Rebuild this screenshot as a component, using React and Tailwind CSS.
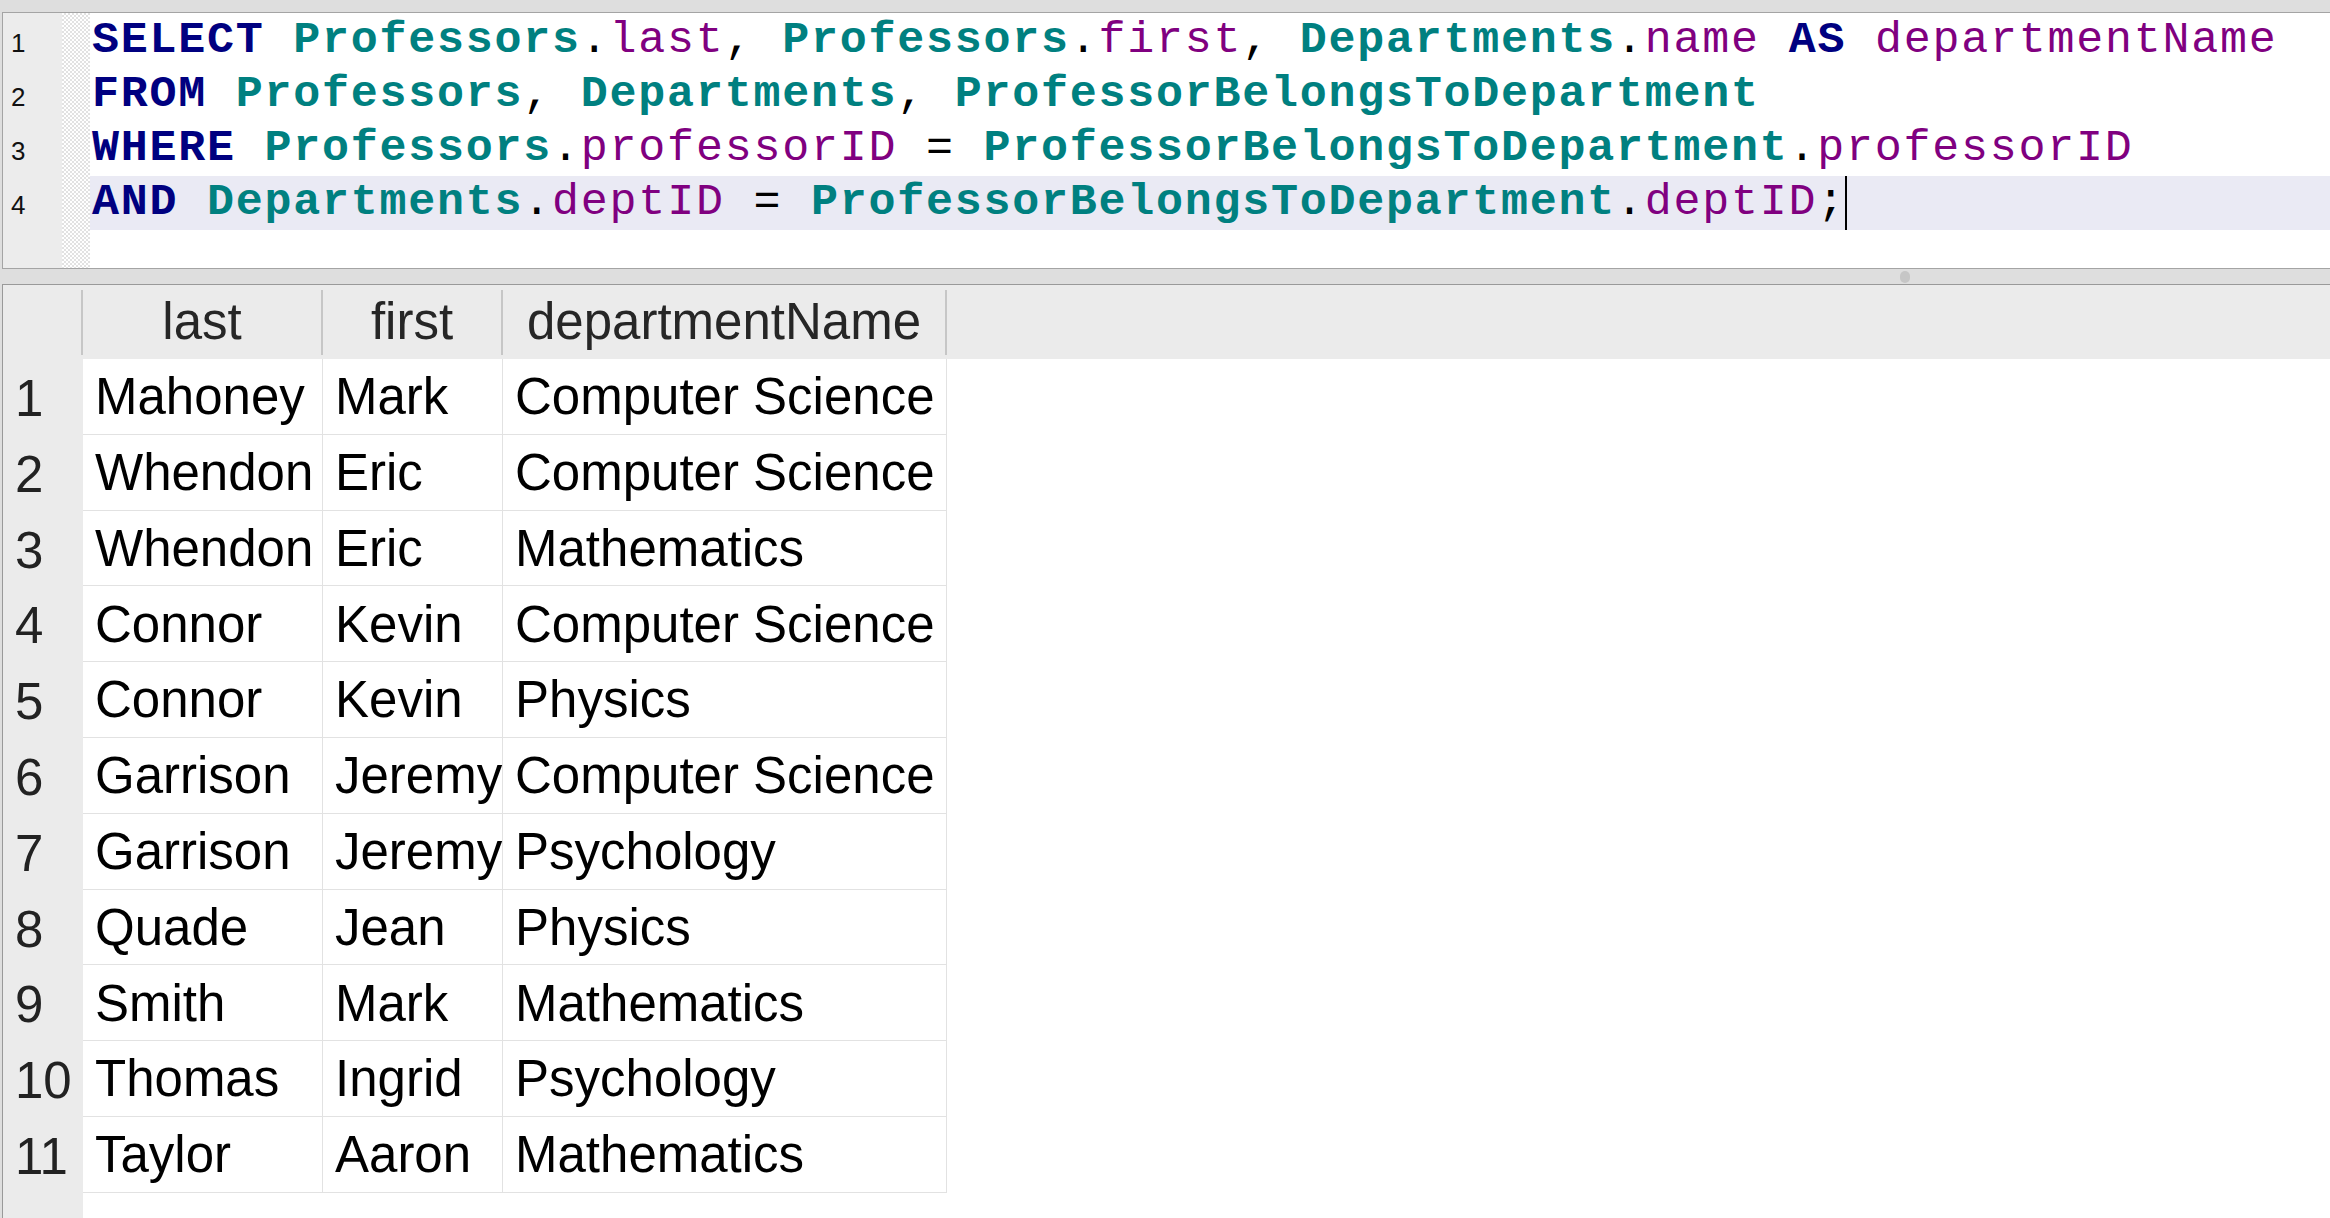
import React from "react";

const K = ({ children }) => <span className="text-[#000080] font-bold">{children}</span>;
const T = ({ children }) => <span className="text-[#008080] font-bold">{children}</span>;
const C = ({ children }) => <span className="text-[#800080]">{children}</span>;
const P = ({ children }) => <span className="text-black">{children}</span>;

const lines = [
  <>
    <K>SELECT</K><P> </P><T>Professors</T><P>.</P><C>last</C><P>, </P><T>Professors</T><P>.</P><C>first</C><P>, </P><T>Departments</T><P>.</P><C>name</C><P> </P><K>AS</K><P> </P><C>departmentName</C>
  </>,
  <>
    <K>FROM</K><P> </P><T>Professors</T><P>, </P><T>Departments</T><P>, </P><T>ProfessorBelongsToDepartment</T>
  </>,
  <>
    <K>WHERE</K><P> </P><T>Professors</T><P>.</P><C>professorID</C><P> = </P><T>ProfessorBelongsToDepartment</T><P>.</P><C>professorID</C>
  </>,
  <>
    <K>AND</K><P> </P><T>Departments</T><P>.</P><C>deptID</C><P> = </P><T>ProfessorBelongsToDepartment</T><P>.</P><C>deptID</C><P>;</P>
  </>,
];

const rows = [
  ["Mahoney", "Mark", "Computer Science"],
  ["Whendon", "Eric", "Computer Science"],
  ["Whendon", "Eric", "Mathematics"],
  ["Connor", "Kevin", "Computer Science"],
  ["Connor", "Kevin", "Physics"],
  ["Garrison", "Jeremy", "Computer Science"],
  ["Garrison", "Jeremy", "Psychology"],
  ["Quade", "Jean", "Physics"],
  ["Smith", "Mark", "Mathematics"],
  ["Thomas", "Ingrid", "Psychology"],
  ["Taylor", "Aaron", "Mathematics"],
];

export default function App() {
  return (
    <div className="w-[2330px] h-[1218px] bg-[#dedede] flex flex-col overflow-hidden font-['Liberation_Sans',Arial,sans-serif]">
      {/* Editor */}
      <div className="mt-[12px] ml-[2px] h-[257px] shrink-0 flex bg-white border-t border-l border-b border-[#a4a4a4]">
        <div className="w-[59px] bg-[#ececec] flex flex-col pt-[1px]">
          {[1, 2, 3, 4].map((n) => (
            <div key={n} className="h-[54px] flex items-center pl-[8px] pt-[4px] text-[26px] text-[#111]">
              {n}
            </div>
          ))}
        </div>
        <div className="w-[28px] bg-[repeating-conic-gradient(#e2e2e2_0%_25%,#ffffff_0%_50%)] bg-[length:4px_4px]" />
        <div className="flex-1 flex flex-col pt-[1px] font-['Liberation_Mono',monospace] text-[45px] tracking-[1.75px]">
          {lines.map((l, i) => (
            <div
              key={i}
              className={
                "h-[54px] leading-[54px] pl-[2px] whitespace-pre flex items-center " +
                (i === 3 ? "bg-[#eaeaf4]" : "")
              }
            >
              <span>{l}</span>
              {i === 3 && <span className="w-[2px] h-[54px] bg-black ml-[-1px]" />}
            </div>
          ))}
        </div>
      </div>

      {/* Splitter */}
      <div className="h-[15px] shrink-0 relative">
        <div className="absolute left-[1900px] top-[2px] w-[10px] h-[12px] rounded-full bg-[#c6c6c6]" />
      </div>

      {/* Table */}
      <div className="flex-1 ml-[2px] border-t border-l border-[#999999] flex flex-col bg-white">
        <div className="h-[74px] shrink-0 bg-[#ebebeb] flex text-[51px] text-[#262626]">
          <div className="w-[80px] flex items-center justify-end">
            <div className="w-[2px] h-[65px] bg-[#c6c6c6]" />
          </div>
          {[
            ["last", "w-[240px]"],
            ["first", "w-[180px]"],
            ["departmentName", "w-[444px]"],
          ].map(([h, w]) => (
            <div key={h} className={w + " flex items-center"}>
              <div className="flex-1 text-center">{h}</div>
              <div className="w-[2px] h-[65px] bg-[#c6c6c6]" />
            </div>
          ))}
        </div>
        <div className="flex-1 flex">
          <div className="w-[80px] bg-[#ebebeb] flex flex-col text-[51px] text-[#222]">
            {rows.map((r, i) => (
              <div key={i} className="h-[75.8px] flex flex-col">
                <div className="flex-1 flex items-center pl-[12px] pt-[2px]">{i + 1}</div>
                <div className="h-[2px] ml-[4px] w-[72px] bg-[#c4c4c4]" />
              </div>
            ))}
          </div>
          <div className="flex flex-col text-[51px] text-black">
            {rows.map((r, i) => (
              <div key={i} className="h-[75.8px] flex">
                <div className="w-[240px] border-r border-b border-[#e2e2e2] flex items-center pl-[12px] pt-[2px] whitespace-nowrap">{r[0]}</div>
                <div className="w-[180px] border-r border-b border-[#e2e2e2] flex items-center pl-[12px] pt-[2px] whitespace-nowrap">{r[1]}</div>
                <div className="w-[444px] border-r border-b border-[#e2e2e2] flex items-center pl-[12px] pt-[2px] whitespace-nowrap">{r[2]}</div>
              </div>
            ))}
          </div>
        </div>
      </div>
    </div>
  );
}
